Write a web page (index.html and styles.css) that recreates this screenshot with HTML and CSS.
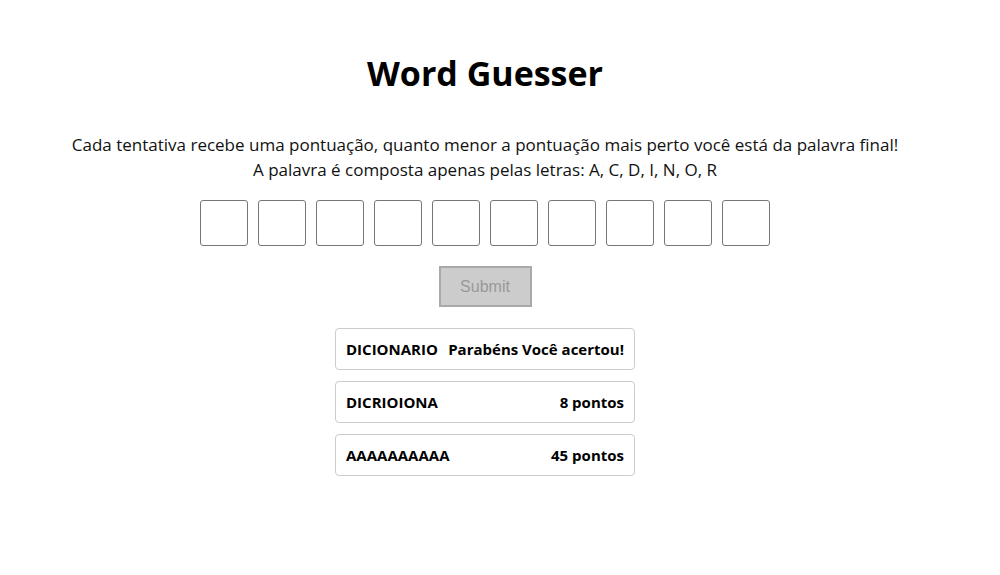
FILE: index.html
```html
<!DOCTYPE html>
<html lang="pt">
<head>
<meta charset="utf-8">
<title>Word Guesser</title>
<link rel="stylesheet" href="styles.css">
</head>
<body>
<main class="app">
  <h1 class="title">Word Guesser</h1>
  <p class="intro">Cada tentativa recebe uma pontuação, quanto menor a pontuação mais perto você está da palavra final!<br>A palavra é composta apenas pelas letras: A, C, D, I, N, O, R</p>
  <div class="letters">
    <input class="letter" maxlength="1">
    <input class="letter" maxlength="1">
    <input class="letter" maxlength="1">
    <input class="letter" maxlength="1">
    <input class="letter" maxlength="1">
    <input class="letter" maxlength="1">
    <input class="letter" maxlength="1">
    <input class="letter" maxlength="1">
    <input class="letter" maxlength="1">
    <input class="letter" maxlength="1">
  </div>
  <button class="submit" disabled>Submit</button>
  <ul class="guesses">
    <li class="guess"><span>DICIONARIO</span><span>Parabéns Você acertou!</span></li>
    <li class="guess"><span>DICRIOIONA</span><span>8 pontos</span></li>
    <li class="guess"><span>AAAAAAAAAA</span><span>45 pontos</span></li>
  </ul>
</main>
</body>
</html>
```
FILE: styles.css
```css
html, body {
  margin: 0;
  padding: 0;
  background: #fff;
}
body {
  font-family: "Open Sans", "Noto Sans", sans-serif;
  color: #000;
}
.app {
  width: 970px;
  display: flex;
  flex-direction: column;
  align-items: center;
  padding-top: 50px;
}
.title {
  margin: 0;
  font-size: 34px;
  font-weight: 700;
  line-height: 46px;
}
.intro {
  margin: 36px 0 0;
  text-align: center;
  font-size: 17px;
  line-height: 25px;
  color: #111;
}
.letters {
  display: flex;
  gap: 10px;
  margin-top: 18px;
}
.letter {
  box-sizing: border-box;
  width: 48px;
  height: 46px;
  border: 1px solid #767676;
  border-radius: 3px;
  padding: 0;
  text-align: center;
  font-size: 20px;
  background: #fff;
}
.submit {
  box-sizing: border-box;
  margin-top: 20px;
  width: 93px;
  height: 41px;
  background: #ccc;
  border: 2px solid #a9a9a9;
  color: #999;
  font-family: "Liberation Sans", Arial, sans-serif;
  font-size: 16px;
}
.guesses {
  list-style: none;
  margin: 21px 0 0;
  padding: 0;
  display: flex;
  flex-direction: column;
  gap: 11px;
}
.guess {
  box-sizing: border-box;
  width: 300px;
  height: 42px;
  border: 1px solid #ccc;
  border-radius: 4px;
  padding: 0 10px;
  display: flex;
  justify-content: space-between;
  align-items: center;
  font-size: 15px;
  font-weight: 700;
}
```
